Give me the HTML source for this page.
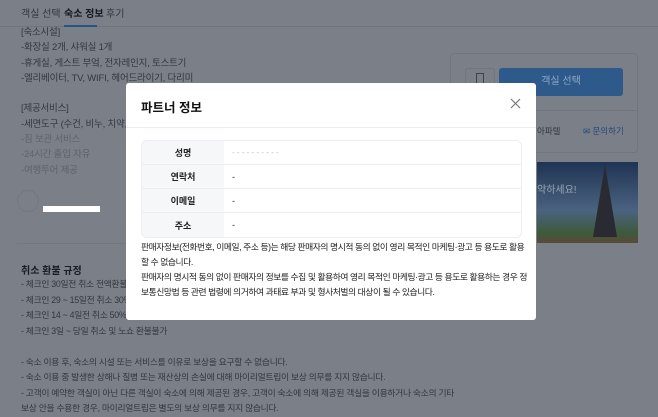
<!DOCTYPE html>
<html><head><meta charset="utf-8"><style>
*{margin:0;padding:0;box-sizing:border-box}
body{width:658px;height:400px;overflow:hidden;background:#7a7f88;font-family:"Liberation Sans","Noto Sans CJK KR",sans-serif;color:#20242b;position:relative;font-size:9.5px}
.a{position:absolute;white-space:nowrap}
.dim{color:#33383f}
.faint{color:#5d636c}
.modal{position:absolute;left:126px;top:83px;width:410px;height:237px;background:#fff;border-radius:3px}
.mh{height:45px;border-bottom:1px solid #eceef1;position:relative}
.mh b{position:absolute;left:15px;top:14px;font-size:12.5px;color:#111}
table{position:absolute;left:15px;top:57px;width:381px;border-collapse:separate;border-spacing:0;border:1px solid #eceef1;border-radius:6px;overflow:hidden}
td{height:24px;font-size:9px;border-bottom:1px solid #eceef1}
tr:last-child td{border-bottom:none}
td.l{width:82px;background:#f6f7f9;text-align:center;font-weight:bold;color:#222}
td.v{padding-left:8px}
.desc{position:absolute;left:15px;top:157px;width:384px;white-space:nowrap;font-size:8.8px;letter-spacing:-0.45px;line-height:15px;color:#222}
</style></head><body>
<div class="a dim" style="left:21px;top:5px;font-size:10px">객실 선택</div>
<div class="a" style="left:64px;top:5px;font-size:10px;font-weight:bold;color:#151820">숙소 정보</div>
<div class="a dim" style="left:106px;top:5px;font-size:10px">후기</div>
<div class="a" style="left:0;top:26px;width:658px;height:1px;background:#6f747d"></div>
<div class="a" style="left:64px;top:25px;width:33px;height:2px;background:#24548a"></div>
<div class="a dim" style="left:21px;top:25px;line-height:15.3px;letter-spacing:-0.2px">[숙소시설]<br>-화장실 2개, 샤워실 1개<br>-휴게실, 게스트 부엌, 전자레인지, 토스트기<br>-엘리베이터, TV, WIFI, 헤어드라이기, 다리미<br><br>[제공서비스]<br>-세면도구 (수건, 비누, 치약, 샴푸<br><span class="faint">-짐 보관 서비스<br>-24시간 출입 자유<br>-여행투어 제공</span></div>
<div class="a" style="left:17px;top:190px;width:22px;height:22px;border-radius:50%;border:1px solid #737880"></div>
<div class="a" style="left:43px;top:206px;width:57px;height:6px;background:#fff"></div>
<div class="a" style="left:17px;top:243px;width:430px;height:1px;background:#737880"></div>
<div class="a" style="left:21px;top:262px;font-size:10px;font-weight:bold;color:#1a1d23">취소 환불 규정</div>
<div class="a dim" style="left:21px;top:277px;line-height:15.5px;font-size:8.8px;letter-spacing:-0.3px">- 체크인 30일전 취소 전액환불<br>- 체크인 29 ~ 15일전 취소 30%<br>- 체크인 14 ~ 4일전 취소 50%<br>- 체크인 3일 ~ 당일 취소 및 노쇼 환불불가<br><br>- 숙소 이용 후, 숙소의 시설 또는 서비스를 이유로 보상을 요구할 수 없습니다.<br>- 숙소 이용 중 발생한 상해나 질병 또는 재산상의 손실에 대해 마이리얼트립이 보상 의무를 지지 않습니다.<br>- 고객이 예약한 객실이 아닌 다른 객실이 숙소에 의해 제공된 경우, 고객이 숙소에 의해 제공된 객실을 이용하거나 숙소의 기타<br>보상 안을 수용한 경우, 마이리얼트립은 별도의 보상 의무를 지지 않습니다.</div>
<div class="a" style="left:450px;top:53px;width:188px;height:100px;border:1px solid #70757e;border-radius:4px"></div>
<div class="a" style="left:465px;top:68px;width:30px;height:28px;border:1px solid #70757e;border-radius:3px"></div>
<div class="a" style="left:476px;top:73px;width:8px;height:11px;border:1px solid #3d424a;border-bottom:none"></div>
<div class="a" style="left:499px;top:68px;width:124px;height:28px;background:#2d5a8a;border-radius:3px;color:#8fa9c6;text-align:center;line-height:28px;font-size:10px">객실 선택</div>
<div class="a" style="left:450px;top:110px;width:188px;height:1px;background:#70757e"></div>
<div class="a dim" style="left:537px;top:125px;font-size:8.5px">아파텔</div>
<div class="a" style="left:583px;top:125px;font-size:8.5px;color:#23497a">✉ 문의하기</div>
<div class="a" style="left:537px;top:162px;width:101px;height:81px;background:linear-gradient(#1f3452,#4a6380 60%,#3e5a3a 88%,#5a4a3a)"></div>
<div class="a" style="left:537px;top:181px;color:#9aa5b5;font-size:10px">약하세요!</div>
<div class="a" style="left:593px;top:165px;width:0;height:0;border-left:12px solid transparent;border-right:12px solid transparent;border-bottom:72px solid #2a2a33"></div>
<div class="modal">
<div class="mh"><b>파트너 정보</b><svg style="position:absolute;left:384px;top:15px" width="11" height="11" viewBox="0 0 11 11"><path d="M1 1L10 10M10 1L1 10" stroke="#777" stroke-width="1.2"/></svg></div>
<table>
<tr><td class="l">성명</td><td class="v" style="color:#bbb;font-size:8px">- - - - - - - - - -</td></tr>
<tr><td class="l">연락처</td><td class="v">-</td></tr>
<tr><td class="l">이메일</td><td class="v">-</td></tr>
<tr><td class="l">주소</td><td class="v">-</td></tr>
</table>
<div class="desc">판매자정보(전화번호, 이메일, 주소 등)는 해당 판매자의 명시적 동의 없이 영리 목적인 마케팅·광고 등 용도로 활용<br>할 수 없습니다.<br>판매자의 명시적 동의 없이 판매자의 정보를 수집 및 활용하여 영리 목적인 마케팅·광고 등 용도로 활용하는 경우 정<br>보통신망법 등 관련 법령에 의거하여 과태료 부과 및 형사처벌의 대상이 될 수 있습니다.</div>
</div>
</body></html>
